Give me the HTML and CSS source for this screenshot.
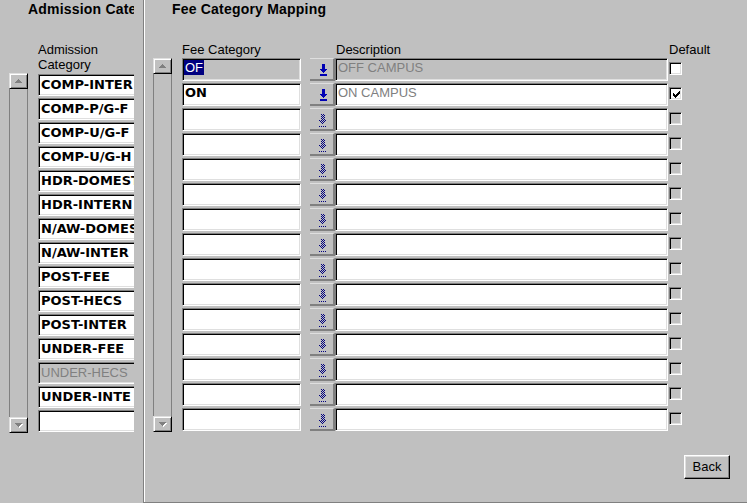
FILE: index.html
```html
<!DOCTYPE html>
<html>
<head>
<meta charset="utf-8">
<link rel="stylesheet" href="styles.css">
</head>
<body>
<div class="left">
  <div class="left-clip">
    <div class="title title-left">Admission Cate</div>
    <div class="left-head">Admission<br>Category</div>
    <div class="left-body">
      <div class="scroll scroll-left">
        <div class="sb-btn"><svg width="7" height="4" viewBox="0 0 7 4" shape-rendering="crispEdges"><path d="M3 0h1v1h1v1h1v1h1v1H0V3h1V2h1V1h1z" fill="#808080"/></svg></div>
        <div class="sb-track"></div>
        <div class="sb-btn"><svg width="8" height="5" viewBox="0 0 8 5" shape-rendering="crispEdges"><path d="M1 1h7v1H7v1H6v1H5v1H4V4H3V3H2V2H1z" fill="#fff"/><path d="M0 0h7v1H6v1H5v1H4v1H3V3H2V2H1V1H0z" fill="#808080"/></svg></div>
      </div>
      <div class="list">
        <div class="fld b">COMP-INTER</div>
        <div class="fld b">COMP-P/G-F</div>
        <div class="fld b">COMP-U/G-F</div>
        <div class="fld b">COMP-U/G-H</div>
        <div class="fld b">HDR-DOMEST</div>
        <div class="fld b">HDR-INTERN</div>
        <div class="fld b">N/AW-DOMES</div>
        <div class="fld b">N/AW-INTER</div>
        <div class="fld b">POST-FEE</div>
        <div class="fld b">POST-HECS</div>
        <div class="fld b">POST-INTER</div>
        <div class="fld b">UNDER-FEE</div>
        <div class="fld dis">UNDER-HECS</div>
        <div class="fld b">UNDER-INTE</div>
        <div class="fld"></div>
      </div>
    </div>
  </div>
</div>

<div class="right">
  <div class="title title-right">Fee Category Mapping</div>
  <div class="right-head">
    <div class="hd-fee">Fee Category</div>
    <div class="hd-desc">Description</div>
    <div class="hd-def">Default</div>
  </div>
  <div class="right-body">
    <div class="scroll scroll-right">
      <div class="sb-btn"><svg width="7" height="4" viewBox="0 0 7 4" shape-rendering="crispEdges"><path d="M3 0h1v1h1v1h1v1h1v1H0V3h1V2h1V1h1z" fill="#808080"/></svg></div>
      <div class="sb-track"></div>
      <div class="sb-btn"><svg width="8" height="5" viewBox="0 0 8 5" shape-rendering="crispEdges"><path d="M1 1h7v1H7v1H6v1H5v1H4V4H3V3H2V2H1z" fill="#fff"/><path d="M0 0h7v1H6v1H5v1H4v1H3V3H2V2H1V1H0z" fill="#808080"/></svg></div>
    </div>
    <div class="rows">
      <div class="row">
        <div class="fld fee gray"><span class="sel">OF</span></div>
        <div class="lov"><svg class="arr" width="7" height="12" viewBox="0 0 7 12" shape-rendering="crispEdges"><path d="M2 0h3v5h2v1H6v1H5v1H4v1H3V8H2V7H1V6H0V5h2z M0 10h7v2H0z" fill="#0000b4"/></svg></div>
        <div class="fld desc gray dtext">OFF CAMPUS</div>
        <div class="cb on"></div>
      </div>
      <div class="row">
        <div class="fld fee b">ON</div>
        <div class="lov"><svg class="arr" width="7" height="12" viewBox="0 0 7 12" shape-rendering="crispEdges"><path d="M2 0h3v5h2v1H6v1H5v1H4v1H3V8H2V7H1V6H0V5h2z M0 10h7v2H0z" fill="#0000b4"/></svg></div>
        <div class="fld desc dtext">ON CAMPUS</div>
        <div class="cb on"><svg width="7" height="7" viewBox="0 0 7 7" shape-rendering="crispEdges"><path d="M6 0h1v3H6v1H5v1H4v1H3v1H2V6H1V5H0V2h1v1h1v1h1V3h1V2h1V1h1z" fill="#000"/></svg></div>
      </div>
      <div class="row"><div class="fld fee"></div><div class="lov"><svg class="arr dim" width="8" height="13" viewBox="0 0 8 13" shape-rendering="crispEdges"><path d="M2 0h1v1H2zM4 0h1v1H4zM3 1h1v1H3zM5 1h1v1H5zM2 2h1v1H2zM4 2h1v1H4zM3 3h1v1H3zM5 3h1v1H5zM2 4h1v1H2zM4 4h1v1H4zM3 5h1v1H3zM5 5h1v1H5zM0 6h1v1H0zM2 6h1v1H2zM4 6h1v1H4zM6 6h1v1H6zM1 7h1v1H1zM3 7h1v1H3zM5 7h1v1H5zM2 8h1v1H2zM4 8h1v1H4zM3 9h1v1H3zM0 12h1v1H0zM2 12h1v1H2zM4 12h1v1H4zM6 12h1v1H6z"/></svg></div><div class="fld desc"></div><div class="cb"></div></div>
      <div class="row"><div class="fld fee"></div><div class="lov"><svg class="arr dim" width="8" height="13" viewBox="0 0 8 13" shape-rendering="crispEdges"><path d="M2 0h1v1H2zM4 0h1v1H4zM3 1h1v1H3zM5 1h1v1H5zM2 2h1v1H2zM4 2h1v1H4zM3 3h1v1H3zM5 3h1v1H5zM2 4h1v1H2zM4 4h1v1H4zM3 5h1v1H3zM5 5h1v1H5zM0 6h1v1H0zM2 6h1v1H2zM4 6h1v1H4zM6 6h1v1H6zM1 7h1v1H1zM3 7h1v1H3zM5 7h1v1H5zM2 8h1v1H2zM4 8h1v1H4zM3 9h1v1H3zM0 12h1v1H0zM2 12h1v1H2zM4 12h1v1H4zM6 12h1v1H6z"/></svg></div><div class="fld desc"></div><div class="cb"></div></div>
      <div class="row"><div class="fld fee"></div><div class="lov"><svg class="arr dim" width="8" height="13" viewBox="0 0 8 13" shape-rendering="crispEdges"><path d="M2 0h1v1H2zM4 0h1v1H4zM3 1h1v1H3zM5 1h1v1H5zM2 2h1v1H2zM4 2h1v1H4zM3 3h1v1H3zM5 3h1v1H5zM2 4h1v1H2zM4 4h1v1H4zM3 5h1v1H3zM5 5h1v1H5zM0 6h1v1H0zM2 6h1v1H2zM4 6h1v1H4zM6 6h1v1H6zM1 7h1v1H1zM3 7h1v1H3zM5 7h1v1H5zM2 8h1v1H2zM4 8h1v1H4zM3 9h1v1H3zM0 12h1v1H0zM2 12h1v1H2zM4 12h1v1H4zM6 12h1v1H6z"/></svg></div><div class="fld desc"></div><div class="cb"></div></div>
      <div class="row"><div class="fld fee"></div><div class="lov"><svg class="arr dim" width="8" height="13" viewBox="0 0 8 13" shape-rendering="crispEdges"><path d="M2 0h1v1H2zM4 0h1v1H4zM3 1h1v1H3zM5 1h1v1H5zM2 2h1v1H2zM4 2h1v1H4zM3 3h1v1H3zM5 3h1v1H5zM2 4h1v1H2zM4 4h1v1H4zM3 5h1v1H3zM5 5h1v1H5zM0 6h1v1H0zM2 6h1v1H2zM4 6h1v1H4zM6 6h1v1H6zM1 7h1v1H1zM3 7h1v1H3zM5 7h1v1H5zM2 8h1v1H2zM4 8h1v1H4zM3 9h1v1H3zM0 12h1v1H0zM2 12h1v1H2zM4 12h1v1H4zM6 12h1v1H6z"/></svg></div><div class="fld desc"></div><div class="cb"></div></div>
      <div class="row"><div class="fld fee"></div><div class="lov"><svg class="arr dim" width="8" height="13" viewBox="0 0 8 13" shape-rendering="crispEdges"><path d="M2 0h1v1H2zM4 0h1v1H4zM3 1h1v1H3zM5 1h1v1H5zM2 2h1v1H2zM4 2h1v1H4zM3 3h1v1H3zM5 3h1v1H5zM2 4h1v1H2zM4 4h1v1H4zM3 5h1v1H3zM5 5h1v1H5zM0 6h1v1H0zM2 6h1v1H2zM4 6h1v1H4zM6 6h1v1H6zM1 7h1v1H1zM3 7h1v1H3zM5 7h1v1H5zM2 8h1v1H2zM4 8h1v1H4zM3 9h1v1H3zM0 12h1v1H0zM2 12h1v1H2zM4 12h1v1H4zM6 12h1v1H6z"/></svg></div><div class="fld desc"></div><div class="cb"></div></div>
      <div class="row"><div class="fld fee"></div><div class="lov"><svg class="arr dim" width="8" height="13" viewBox="0 0 8 13" shape-rendering="crispEdges"><path d="M2 0h1v1H2zM4 0h1v1H4zM3 1h1v1H3zM5 1h1v1H5zM2 2h1v1H2zM4 2h1v1H4zM3 3h1v1H3zM5 3h1v1H5zM2 4h1v1H2zM4 4h1v1H4zM3 5h1v1H3zM5 5h1v1H5zM0 6h1v1H0zM2 6h1v1H2zM4 6h1v1H4zM6 6h1v1H6zM1 7h1v1H1zM3 7h1v1H3zM5 7h1v1H5zM2 8h1v1H2zM4 8h1v1H4zM3 9h1v1H3zM0 12h1v1H0zM2 12h1v1H2zM4 12h1v1H4zM6 12h1v1H6z"/></svg></div><div class="fld desc"></div><div class="cb"></div></div>
      <div class="row"><div class="fld fee"></div><div class="lov"><svg class="arr dim" width="8" height="13" viewBox="0 0 8 13" shape-rendering="crispEdges"><path d="M2 0h1v1H2zM4 0h1v1H4zM3 1h1v1H3zM5 1h1v1H5zM2 2h1v1H2zM4 2h1v1H4zM3 3h1v1H3zM5 3h1v1H5zM2 4h1v1H2zM4 4h1v1H4zM3 5h1v1H3zM5 5h1v1H5zM0 6h1v1H0zM2 6h1v1H2zM4 6h1v1H4zM6 6h1v1H6zM1 7h1v1H1zM3 7h1v1H3zM5 7h1v1H5zM2 8h1v1H2zM4 8h1v1H4zM3 9h1v1H3zM0 12h1v1H0zM2 12h1v1H2zM4 12h1v1H4zM6 12h1v1H6z"/></svg></div><div class="fld desc"></div><div class="cb"></div></div>
      <div class="row"><div class="fld fee"></div><div class="lov"><svg class="arr dim" width="8" height="13" viewBox="0 0 8 13" shape-rendering="crispEdges"><path d="M2 0h1v1H2zM4 0h1v1H4zM3 1h1v1H3zM5 1h1v1H5zM2 2h1v1H2zM4 2h1v1H4zM3 3h1v1H3zM5 3h1v1H5zM2 4h1v1H2zM4 4h1v1H4zM3 5h1v1H3zM5 5h1v1H5zM0 6h1v1H0zM2 6h1v1H2zM4 6h1v1H4zM6 6h1v1H6zM1 7h1v1H1zM3 7h1v1H3zM5 7h1v1H5zM2 8h1v1H2zM4 8h1v1H4zM3 9h1v1H3zM0 12h1v1H0zM2 12h1v1H2zM4 12h1v1H4zM6 12h1v1H6z"/></svg></div><div class="fld desc"></div><div class="cb"></div></div>
      <div class="row"><div class="fld fee"></div><div class="lov"><svg class="arr dim" width="8" height="13" viewBox="0 0 8 13" shape-rendering="crispEdges"><path d="M2 0h1v1H2zM4 0h1v1H4zM3 1h1v1H3zM5 1h1v1H5zM2 2h1v1H2zM4 2h1v1H4zM3 3h1v1H3zM5 3h1v1H5zM2 4h1v1H2zM4 4h1v1H4zM3 5h1v1H3zM5 5h1v1H5zM0 6h1v1H0zM2 6h1v1H2zM4 6h1v1H4zM6 6h1v1H6zM1 7h1v1H1zM3 7h1v1H3zM5 7h1v1H5zM2 8h1v1H2zM4 8h1v1H4zM3 9h1v1H3zM0 12h1v1H0zM2 12h1v1H2zM4 12h1v1H4zM6 12h1v1H6z"/></svg></div><div class="fld desc"></div><div class="cb"></div></div>
      <div class="row"><div class="fld fee"></div><div class="lov"><svg class="arr dim" width="8" height="13" viewBox="0 0 8 13" shape-rendering="crispEdges"><path d="M2 0h1v1H2zM4 0h1v1H4zM3 1h1v1H3zM5 1h1v1H5zM2 2h1v1H2zM4 2h1v1H4zM3 3h1v1H3zM5 3h1v1H5zM2 4h1v1H2zM4 4h1v1H4zM3 5h1v1H3zM5 5h1v1H5zM0 6h1v1H0zM2 6h1v1H2zM4 6h1v1H4zM6 6h1v1H6zM1 7h1v1H1zM3 7h1v1H3zM5 7h1v1H5zM2 8h1v1H2zM4 8h1v1H4zM3 9h1v1H3zM0 12h1v1H0zM2 12h1v1H2zM4 12h1v1H4zM6 12h1v1H6z"/></svg></div><div class="fld desc"></div><div class="cb"></div></div>
      <div class="row"><div class="fld fee"></div><div class="lov"><svg class="arr dim" width="8" height="13" viewBox="0 0 8 13" shape-rendering="crispEdges"><path d="M2 0h1v1H2zM4 0h1v1H4zM3 1h1v1H3zM5 1h1v1H5zM2 2h1v1H2zM4 2h1v1H4zM3 3h1v1H3zM5 3h1v1H5zM2 4h1v1H2zM4 4h1v1H4zM3 5h1v1H3zM5 5h1v1H5zM0 6h1v1H0zM2 6h1v1H2zM4 6h1v1H4zM6 6h1v1H6zM1 7h1v1H1zM3 7h1v1H3zM5 7h1v1H5zM2 8h1v1H2zM4 8h1v1H4zM3 9h1v1H3zM0 12h1v1H0zM2 12h1v1H2zM4 12h1v1H4zM6 12h1v1H6z"/></svg></div><div class="fld desc"></div><div class="cb"></div></div>
      <div class="row"><div class="fld fee"></div><div class="lov"><svg class="arr dim" width="8" height="13" viewBox="0 0 8 13" shape-rendering="crispEdges"><path d="M2 0h1v1H2zM4 0h1v1H4zM3 1h1v1H3zM5 1h1v1H5zM2 2h1v1H2zM4 2h1v1H4zM3 3h1v1H3zM5 3h1v1H5zM2 4h1v1H2zM4 4h1v1H4zM3 5h1v1H3zM5 5h1v1H5zM0 6h1v1H0zM2 6h1v1H2zM4 6h1v1H4zM6 6h1v1H6zM1 7h1v1H1zM3 7h1v1H3zM5 7h1v1H5zM2 8h1v1H2zM4 8h1v1H4zM3 9h1v1H3zM0 12h1v1H0zM2 12h1v1H2zM4 12h1v1H4zM6 12h1v1H6z"/></svg></div><div class="fld desc"></div><div class="cb"></div></div>
      <div class="row"><div class="fld fee"></div><div class="lov"><svg class="arr dim" width="8" height="13" viewBox="0 0 8 13" shape-rendering="crispEdges"><path d="M2 0h1v1H2zM4 0h1v1H4zM3 1h1v1H3zM5 1h1v1H5zM2 2h1v1H2zM4 2h1v1H4zM3 3h1v1H3zM5 3h1v1H5zM2 4h1v1H2zM4 4h1v1H4zM3 5h1v1H3zM5 5h1v1H5zM0 6h1v1H0zM2 6h1v1H2zM4 6h1v1H4zM6 6h1v1H6zM1 7h1v1H1zM3 7h1v1H3zM5 7h1v1H5zM2 8h1v1H2zM4 8h1v1H4zM3 9h1v1H3zM0 12h1v1H0zM2 12h1v1H2zM4 12h1v1H4zM6 12h1v1H6z"/></svg></div><div class="fld desc"></div><div class="cb"></div></div>
    </div>
  </div>
  <div class="footer">
    <button class="btn">Back</button>
  </div>
</div>
</body>
</html>
```

FILE: styles.css
```css
html, body {
  margin: 0;
  padding: 0;
}
body {
  background: #c0c0c0;
  width: 747px;
  height: 503px;
  overflow: hidden;
  display: flex;
  font-family: "Liberation Sans", Arial, sans-serif;
  font-size: 13px;
  color: #000;
}

/* ---------- left panel ---------- */
.left {
  width: 143px;
  flex: none;
}
.left-clip {
  width: 134px;
  height: 100%;
  overflow: hidden;
}
.title {
  font-weight: bold;
  font-size: 14px;
  line-height: 16px;
  padding-top: 1px;
  white-space: nowrap;
  letter-spacing: 0.2px;
}
.title-left {
  padding-left: 28px;
}
.left-head {
  margin-top: 25px;
  padding-left: 38px;
  line-height: 15px;
  white-space: nowrap;
}
.left-body {
  display: flex;
  gap: 10px;
  margin-top: 1px;
  padding-left: 9px;
}
.list {
  display: flex;
  flex-direction: column;
  gap: 2px;
  padding-top: 1px;
  width: 100px;
  flex: none;
}

/* ---------- scrollbars ---------- */
.scroll {
  width: 19px;
  flex: none;
  display: flex;
  flex-direction: column;
}
.scroll-left { height: 360px; }
.scroll-right { height: 374px; }
.sb-btn {
  height: 16px;
  flex: none;
  box-sizing: border-box;
  border: 1px solid;
  border-color: #dfdfdf #000 #000 #dfdfdf;
  box-shadow: inset 1px 1px #fff, inset -1px -1px #808080;
  display: flex;
  align-items: center;
  justify-content: center;
}
.sb-btn svg { display: block; }
.sb-track {
  flex: 1;
  border-left: 1px solid #808080;
  border-right: 1px solid #808080;
}

/* ---------- fields ---------- */
.fld {
  height: 22px;
  box-sizing: border-box;
  border: 1px solid;
  border-color: #808080 #fff #fff #808080;
  box-shadow: inset 1px 1px #000, inset -1px -1px #dfdfdf;
  background: #fff;
  line-height: 18px;
  padding: 1px 0 0 2px;
  white-space: nowrap;
  overflow: hidden;
}
.b {
  font-family: "DejaVu Sans", Verdana, sans-serif;
  font-weight: bold;
  font-size: 13px;
}
.dis {
  background: #c0c0c0;
  color: #808080;
}
.gray {
  background: #c0c0c0;
}
.dtext {
  color: #808080;
}

/* ---------- right panel ---------- */
.right {
  flex: 1;
  height: 503px;
  box-sizing: border-box;
  border-left: 1px solid #808080;
  border-bottom: 1px solid #808080;
  box-shadow: inset 1px 0 #fff;
  padding-left: 1px;
  display: flex;
  flex-direction: column;
}
.title-right {
  padding-left: 27px;
}
.right-head {
  margin-top: 25px;
  height: 16px;
  line-height: 15px;
  display: flex;
  padding-left: 37px;
  white-space: nowrap;
}
.hd-fee { width: 154px; }
.hd-desc { width: 333px; }
.right-body {
  display: flex;
  gap: 10px;
  padding-left: 8px;
}
.rows {
  display: flex;
  flex-direction: column;
  gap: 2px;
}
.row {
  display: flex;
  align-items: flex-start;
  height: 23px;
}
.row .fld {
  height: 23px;
  padding-top: 0;
}
.fee { width: 119px; }
.desc { width: 333px; }
.sel {
  background: #000080;
  color: #fff;
  padding: 0 1px;
  margin-left: -1px;
}
.lov {
  margin-left: 9px;
  width: 25px;
  height: 23px;
  box-sizing: border-box;
  border-top: 1px solid #dfdfdf;
  border-right: 2px solid #808080;
  border-bottom: 2px solid #808080;
  display: flex;
  justify-content: center;
  align-items: flex-start;
  padding-top: 5px;
  padding-left: 3px;
}
.arr { display: block; }
.arr.dim { fill: #000080; }
.cb {
  margin-left: 1px;
  margin-top: 4px;
  width: 13px;
  height: 13px;
  box-sizing: border-box;
  border: 1px solid;
  border-color: #808080 #fff #fff #808080;
  box-shadow: inset 1px 1px #000, inset -1px -1px #dfdfdf;
  background: #c0c0c0;
  display: flex;
  align-items: center;
  justify-content: center;
  padding: 1px 0 0 1px;
}
.cb.on { background: #fff; }
.cb svg { display: block; }

.footer {
  display: flex;
  justify-content: flex-end;
  margin-top: 23px;
  padding-right: 17px;
}
.btn {
  width: 46px;
  height: 24px;
  box-sizing: border-box;
  margin: 0;
  padding: 0 0 1px 0;
  background: #c0c0c0;
  border: 1px solid;
  border-color: #fff #000 #000 #fff;
  box-shadow: inset -1px -1px #808080, inset 1px 1px #dfdfdf;
  font-family: "Liberation Sans", Arial, sans-serif;
  font-size: 13px;
  color: #000;
  line-height: 20px;
}
```
